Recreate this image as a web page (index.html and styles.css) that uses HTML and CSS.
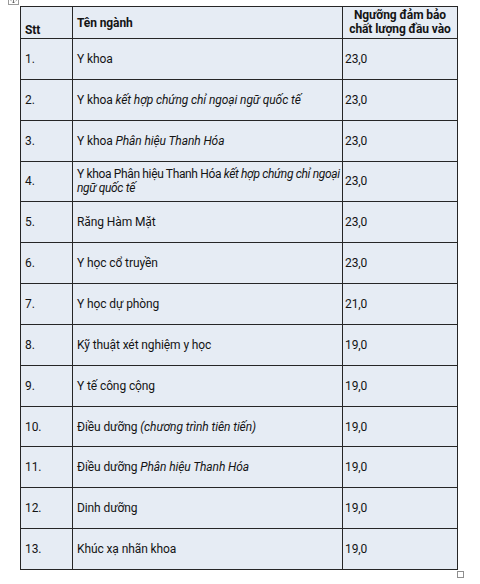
FILE: index.html
```html
<!DOCTYPE html>
<html lang="vi">
<head>
<meta charset="utf-8">
<link rel="stylesheet" href="styles.css">
</head>
<body>
<div class="wrap">
  <svg class="move-handle" width="11" height="11" viewBox="0 0 11 11">
    <rect x="0.5" y="0.5" width="10" height="10" fill="#fff" stroke="#9a9a9a"/>
    <path d="M5.5 2v7M2 5.5h7M4.3 3.2 5.5 2l1.2 1.2M4.3 7.8 5.5 9l1.2-1.2M3.2 4.3 2 5.5l1.2 1.2M7.8 4.3 9 5.5 7.8 6.7" fill="none" stroke="#555" stroke-width="0.8"/>
  </svg>
  <table class="grid">
    <colgroup>
      <col class="c1"><col class="c2"><col class="c3">
    </colgroup>
    <thead>
      <tr class="head">
        <th class="h-stt">Stt</th>
        <th class="h-name">Tên ngành</th>
        <th class="h-score">Ngưỡng đảm bảo<br>chất lượng đầu vào</th>
      </tr>
    </thead>
    <tbody>
      <tr><td>1.</td><td>Y khoa</td><td class="num">23,0</td></tr>
      <tr><td>2.</td><td>Y khoa <i>kết hợp chứng chỉ ngoại ngữ quốc tế</i></td><td class="num">23,0</td></tr>
      <tr><td>3.</td><td>Y khoa <i>Phân hiệu Thanh Hóa</i></td><td class="num">23,0</td></tr>
      <tr><td>4.</td><td class="tight">Y khoa Phân hiệu Thanh Hóa <i>kết hợp chứng chỉ ngoại<br>ngữ quốc tế</i></td><td class="num">23,0</td></tr>
      <tr><td>5.</td><td>Răng Hàm Mặt</td><td class="num">23,0</td></tr>
      <tr><td>6.</td><td>Y học cổ truyền</td><td class="num">23,0</td></tr>
      <tr><td>7.</td><td>Y học dự phòng</td><td class="num">21,0</td></tr>
      <tr><td>8.</td><td>Kỹ thuật xét nghiệm y học</td><td class="num">19,0</td></tr>
      <tr><td>9.</td><td>Y tế công cộng</td><td class="num">19,0</td></tr>
      <tr><td>10.</td><td>Điều dưỡng <i>(chương trình tiên tiến)</i></td><td class="num">19,0</td></tr>
      <tr><td>11.</td><td>Điều dưỡng <i>Phân hiệu Thanh Hóa</i></td><td class="num">19,0</td></tr>
      <tr><td>12.</td><td>Dinh dưỡng</td><td class="num">19,0</td></tr>
      <tr><td>13.</td><td>Khúc xạ nhãn khoa</td><td class="num">19,0</td></tr>
    </tbody>
  </table>
  <span class="resize-handle"></span>
</div>
</body>
</html>
```

FILE: styles.css
```css
html, body {
  margin: 0;
  padding: 0;
  background: #ffffff;
}

body {
  font-family: Roboto, "Liberation Sans", Arial, sans-serif;
  font-size: 12px;
  letter-spacing: -0.1px;
  color: #141414;
}

.wrap {
  position: relative;
  width: 480px;
  height: 584px;
  padding: 6px 0 0 20px;
  box-sizing: border-box;
}

.move-handle {
  position: absolute;
  left: 8px;
  top: -6px;
}

.resize-handle {
  position: absolute;
  left: 457px;
  top: 571px;
  width: 5px;
  height: 5px;
  border: 1px solid #8e8e8e;
  background: #fff;
}

.grid {
  border-collapse: collapse;
  table-layout: fixed;
  width: 437px;
  background: #e6ecf4;
}

.c1 { width: 52px; }
.c2 { width: 270px; }
.c3 { width: 115px; }

.grid th,
.grid td {
  border: 1.6px solid #262626;
  padding: 0 4px;
  line-height: 14px;
  text-align: left;
  vertical-align: middle;
  overflow: visible;
  white-space: nowrap;
}

.grid th {
  font-weight: 700;
}

.head {
  height: 32px;
}

.grid .h-stt {
  vertical-align: bottom;
  padding-bottom: 1px;
}

.grid .h-score {
  text-align: center;
  padding: 1px 2px 2px;
}

.grid tbody tr {
  height: 40.85px;
}

.grid td.num {
  padding-left: 2px;
}

.grid td.tight {
  padding-right: 0;
  letter-spacing: -0.35px;
}
```
